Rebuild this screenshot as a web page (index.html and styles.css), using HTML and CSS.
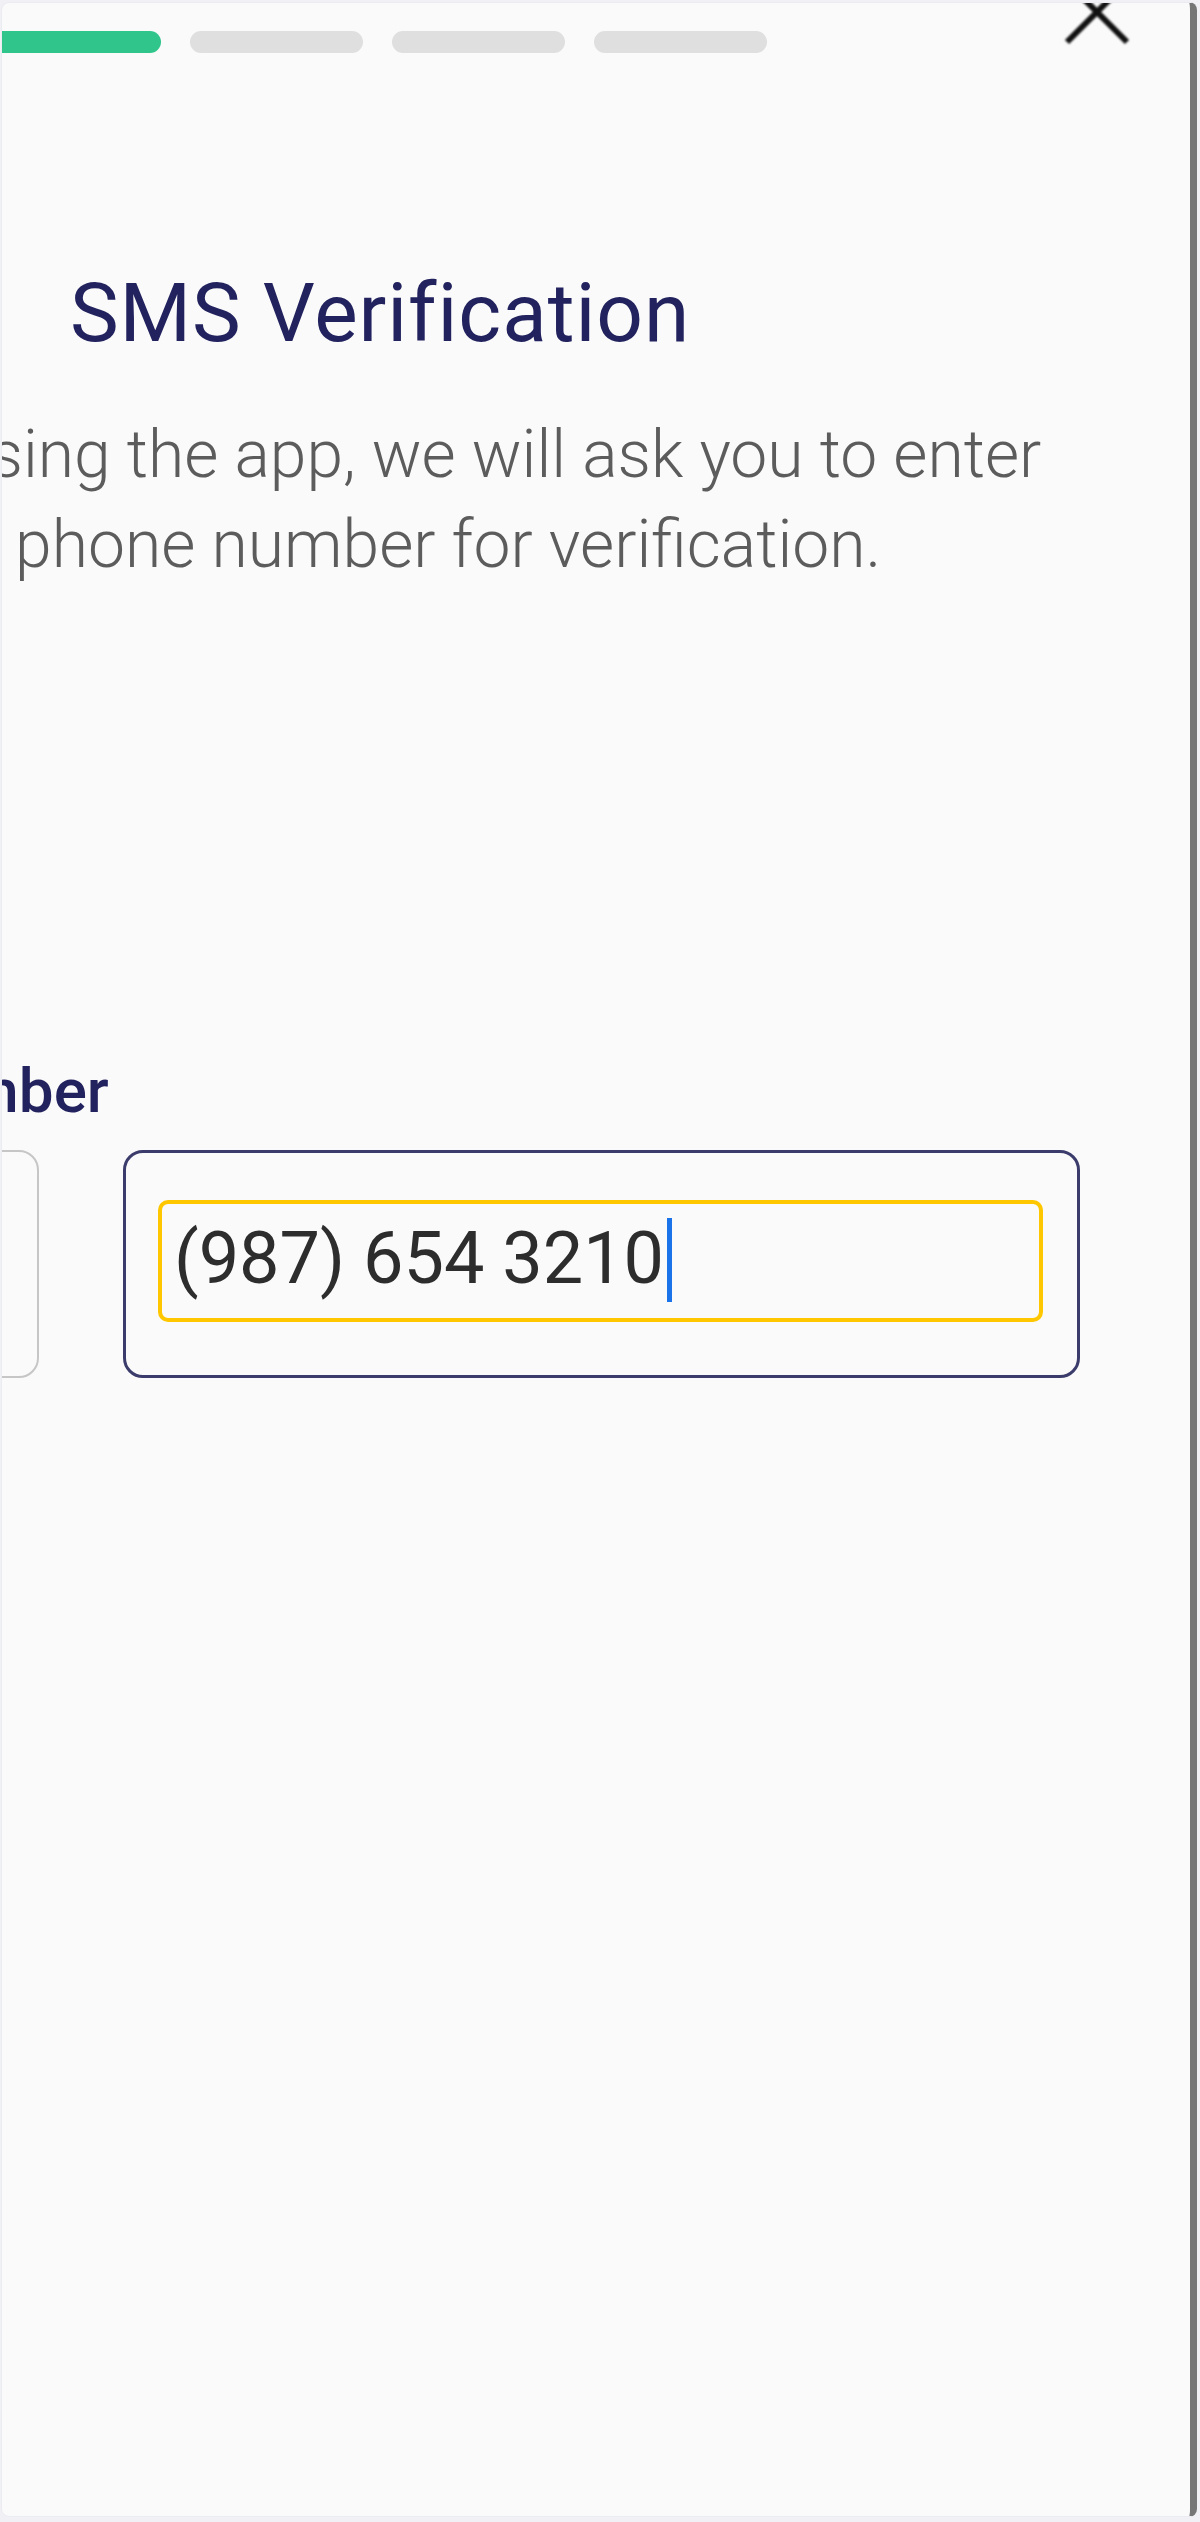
FILE: index.html
```html
<!DOCTYPE html>
<html lang="en">
<head>
  <meta charset="UTF-8">
  <meta name="viewport" content="width=device-width, initial-scale=1.0">
  <title>SMS Verification</title>
  <link rel="stylesheet" href="styles.css">
</head>
<body>
  <div class="card">
    <!-- Thanh tiến trình và nút đóng -->
    <div class="header">
      <div class="steps">
        <span class="step done"></span>
        <span class="step"></span>
        <span class="step"></span>
        <span class="step"></span>
      </div>
      <svg class="close" width="72" height="72" viewBox="0 0 72 72">
        <path d="M6 6 L66 66 M66 6 L6 66" stroke="#111" stroke-width="6" fill="none"/>
      </svg>
    </div>

    <div class="screen">
      <h1 class="title">SMS Verification</h1>
      <p class="intro">
        <span>To start using the app, we will ask you to enter</span>
        <span>your phone number for verification.</span>
      </p>

      <label class="field-label" for="phone">Phone Number</label>
      <div class="phone-row">
        <div class="country-box"></div>
        <div class="phone-box">
          <div class="phone-input" id="phone">(987) 654 3210<span class="caret"></span></div>
        </div>
      </div>
    </div>

    <span class="scroll-thumb"></span>
  </div>
</body>
</html>
```

FILE: styles.css
```css
html, body {
  margin: 0;
  padding: 0;
}
body {
  background-color: #f0f0f5;
  font-family: Roboto, "Noto Sans", Arial, sans-serif;
  padding: 2px 3px 5px 1px;
  height: 2522px;
  box-sizing: border-box;
}
.card {
  position: relative;
  height: 2515px;
  box-sizing: border-box;
  background-color: #fafafa;
  border: 1px solid #ebebf2;
  border-right: 7px solid #767676;
  border-radius: 8px;
  overflow: hidden;
}
.header {
  display: flex;
  justify-content: space-between;
  align-items: flex-start;
}
.steps {
  display: flex;
  gap: 29px;
  margin-top: 28px;
  margin-left: -14px;
}
.step {
  display: block;
  width: 173px;
  height: 22px;
  border-radius: 11px;
  background-color: #dfdfdf;
}
.step.done {
  background-color: #2fc58b;
}
.close {
  margin-top: -27px;
  margin-right: 57px;
  filter: blur(0.8px);
}
.screen {
  width: 1406px;
  margin-left: -328px;
  display: flex;
  flex-direction: column;
}
.title {
  margin: 211px 0 0;
  padding-left: 6px;
  font-size: 82px;
  line-height: 98px;
  font-weight: 400;
  letter-spacing: 0.9px;
  color: #22225e;
  text-align: center;
}
.intro {
  margin: 48px 0 0;
  display: flex;
  flex-direction: column;
  align-items: center;
  font-size: 66px;
  line-height: 90px;
  font-weight: 300;
  color: #5c5c5c;
}
.intro span {
  white-space: nowrap;
}
.field-label {
  margin: 464px 0 0 20px;
  font-size: 62px;
  line-height: 74px;
  font-weight: 500;
  color: #22225e;
}
.phone-row {
  display: flex;
  gap: 84px;
  margin-top: 22px;
  height: 228px;
}
.country-box {
  width: 365px;
  box-sizing: border-box;
  border: 2px solid #c6c6c6;
  border-radius: 20px;
}
.phone-box {
  flex: 1;
  box-sizing: border-box;
  border: 3px solid #3c3c6c;
  border-radius: 20px;
  padding: 47px 34px 0 32px;
}
.phone-input {
  height: 122px;
  box-sizing: border-box;
  border: 4px solid #ffc700;
  border-radius: 10px;
  padding: 0 12px;
  font-size: 72px;
  line-height: 110px;
  color: #2d2d2d;
  white-space: nowrap;
}
.caret {
  display: inline-block;
  width: 5px;
  height: 84px;
  margin-left: 3px;
  vertical-align: -19px;
  background-color: #1a73e8;
}
.scroll-thumb {
  position: absolute;
  right: -6px;
  top: 930px;
  width: 5px;
  height: 50px;
  background-color: #555;
}
```
